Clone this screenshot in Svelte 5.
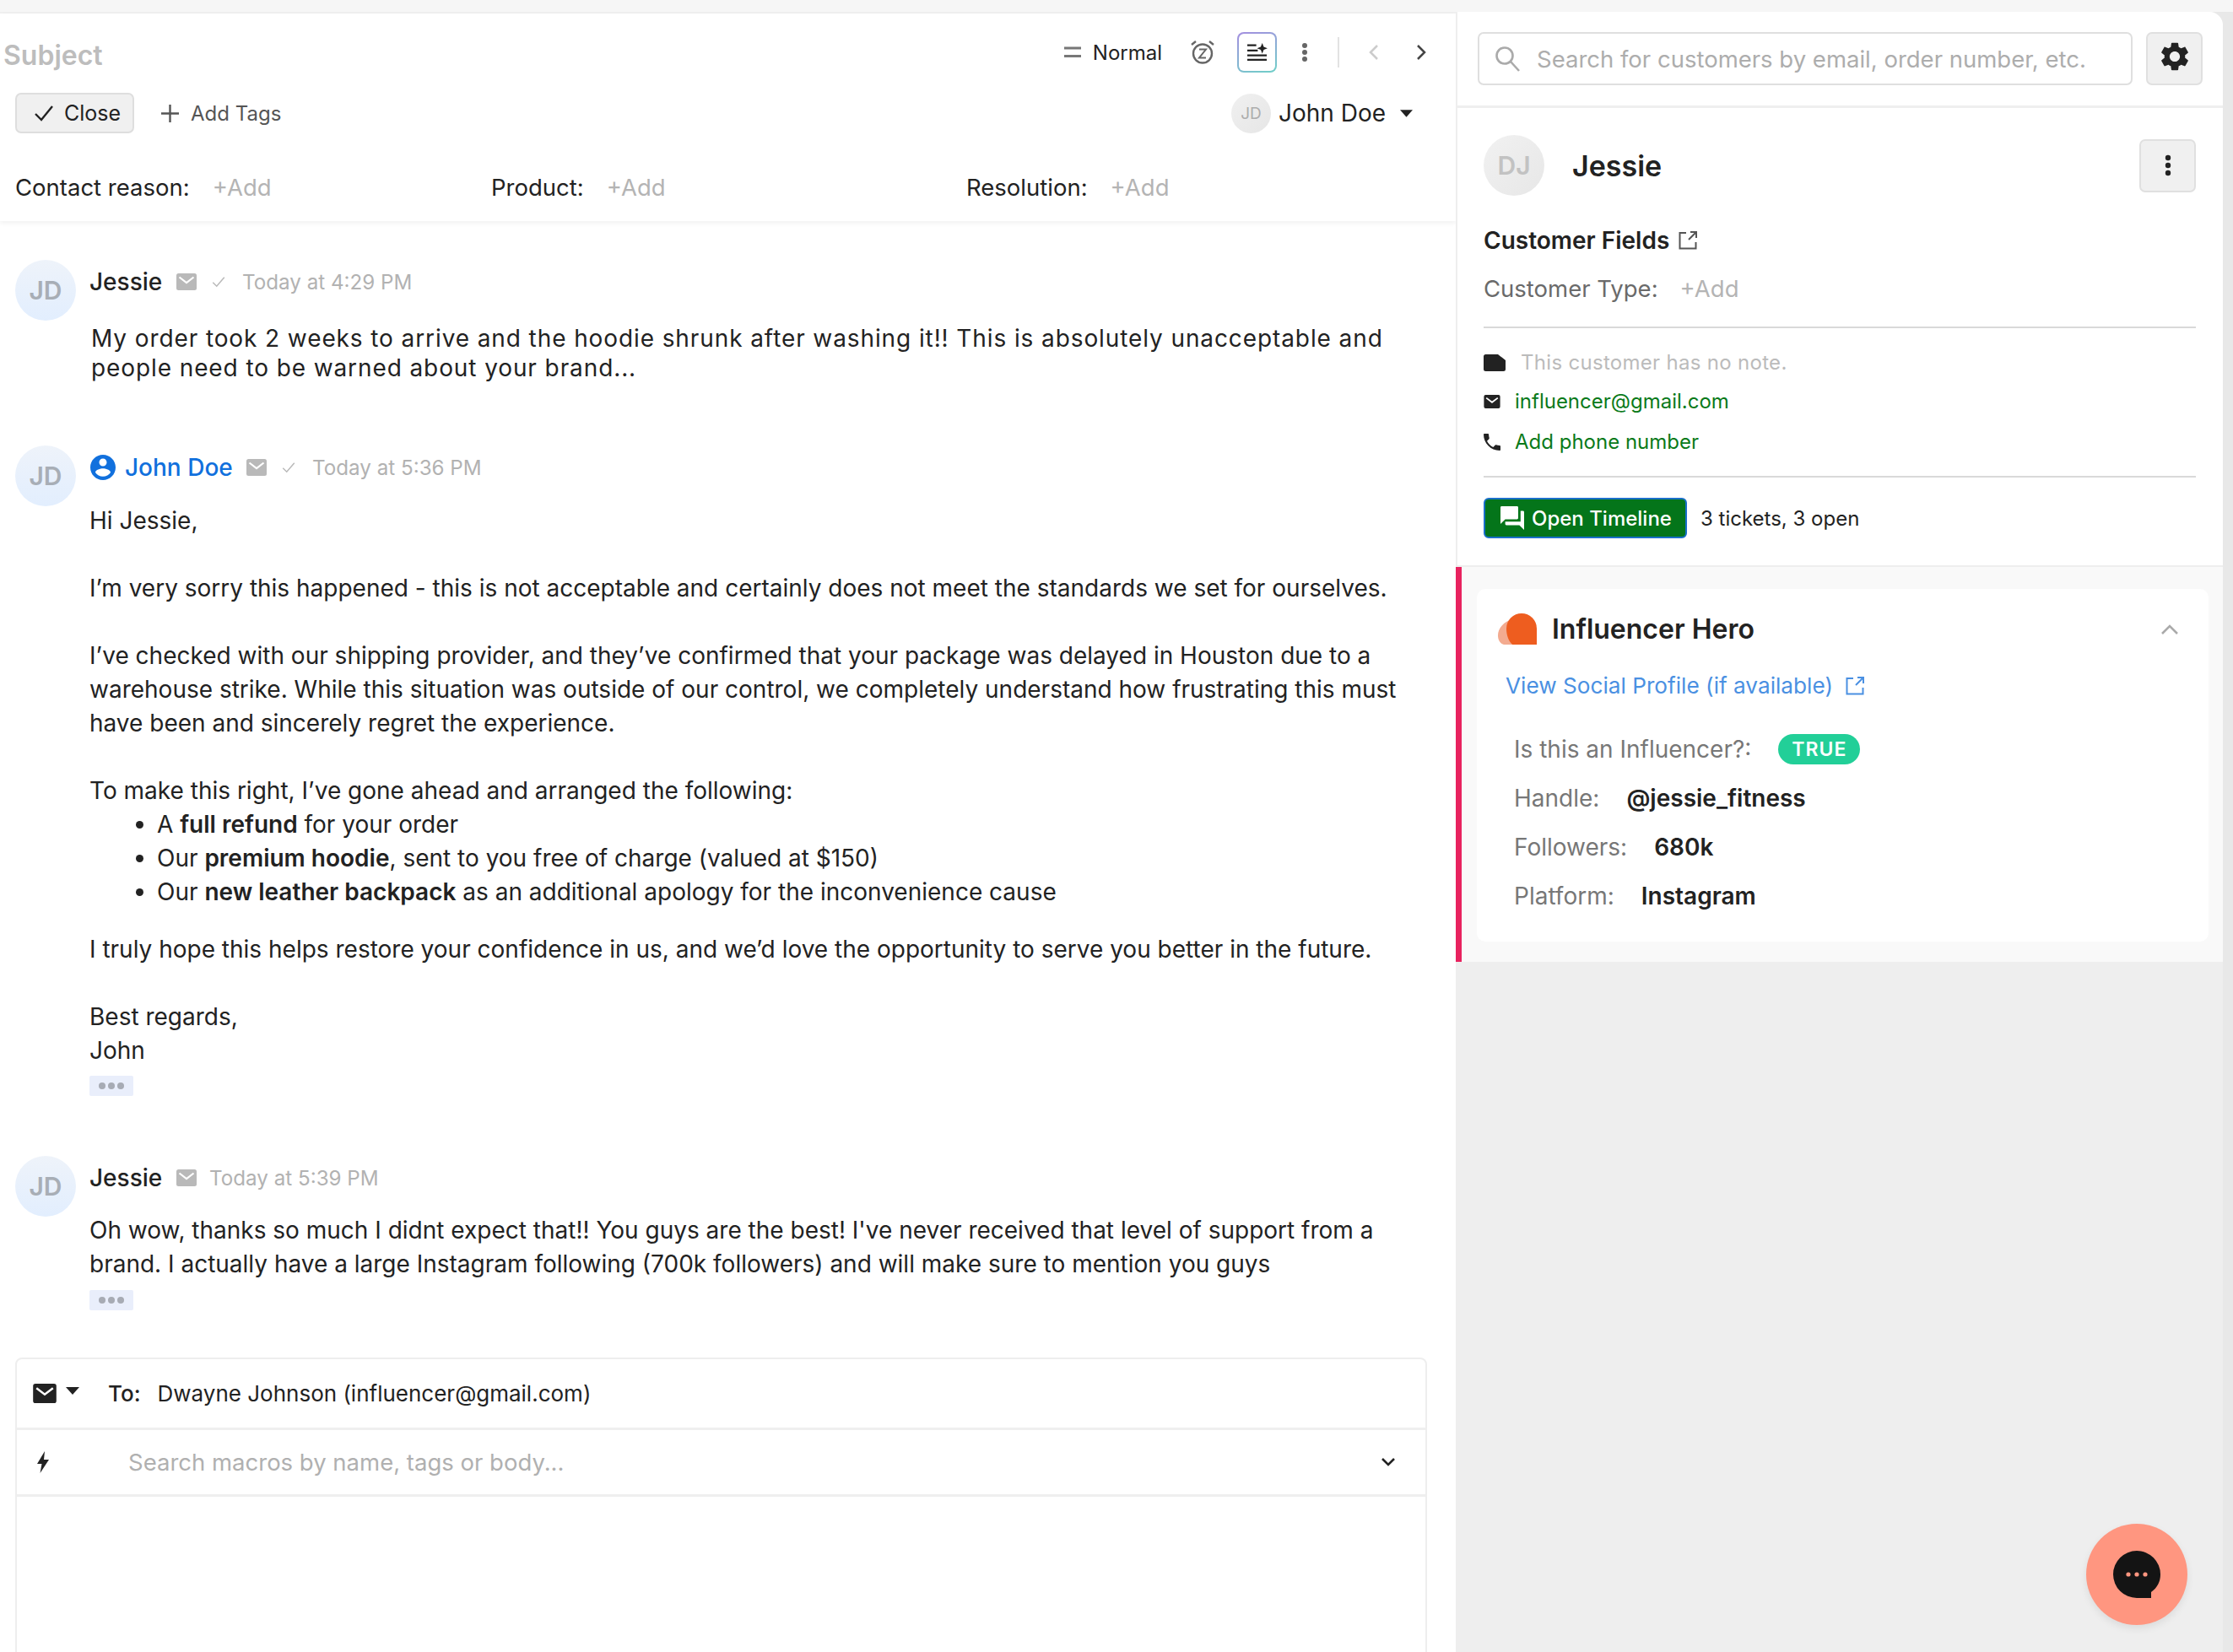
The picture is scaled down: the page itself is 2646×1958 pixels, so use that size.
<script lang="ts">
	const fields = [
		{ label: 'Contact reason:', width: 564 },
		{ label: 'Product:', width: 563 },
		{ label: 'Resolution:', width: 400 }
	];
</script>

{#snippet mail(w, h, fill)}
	<svg class="icon" width={w} height={h} viewBox="0 0 24 20">
		<rect width="24" height="20" rx="2.5" fill={fill} />
		<path d="M3.5 4.5 12 11l8.5-6.5" fill="none" stroke="#fff" stroke-width="2.2" />
	</svg>
{/snippet}

{#snippet check(w, color)}
	<svg class="icon" width={w} height={w} viewBox="0 0 24 24">
		<path d="M3 13l6 6L21 5" fill="none" stroke={color} stroke-width="2" />
	</svg>
{/snippet}

{#snippet caret(w, h)}
	<svg class="icon" width={w} height={h} viewBox="0 0 16 9"><path d="M0 0h16L8 9z" fill="#222" /></svg>
{/snippet}

{#snippet external(color)}
	<svg class="icon" width="24" height="24" viewBox="0 0 24 24" fill="none" stroke={color} stroke-width="2">
		<path d="M10 3H2.5v18.500h19V14M13 11 22 2M15 2h7v7" />
	</svg>
{/snippet}

{#snippet more()}
	<div class="more"><i></i><i></i><i></i></div>
{/snippet}

<div class="app">
	<main class="ticket">
		<header class="head">
			<div class="row-top">
				<h1>Subject</h1>
				<div class="tools">
					<svg class="icon" width="20" height="14" viewBox="0 0 20 14"><path d="M0 2h20M0 11.500h20" stroke="#777" stroke-width="3" /></svg>
					<span class="priority">Normal</span>
					<svg class="icon snooze" width="30" height="30" viewBox="0 0 30 30" fill="none" stroke="#666" stroke-width="2.400">
						<circle cx="15" cy="16.500" r="11" />
						<path d="M2 6l5-4M28 6l-5-4" />
						<path d="M11 11.500h8l-8 10h8" stroke-width="2" />
					</svg>
					<button class="ai" aria-label="Summarize">
						<svg width="25" height="23" viewBox="0 0 28 26">
							<path d="M1 5h12M1 12h14M1 18.500h26M1 24.500h26" stroke="#222" stroke-width="2.500" transform="translate(0 -2)" />
							<path d="M21 0l2 5 5 2-5 2-2 5-2-5-5-2 5-2z" fill="#222" />
						</svg>
					</button>
					<svg class="icon dots" width="10" height="24" viewBox="0 0 10 24"><circle cx="5" cy="4" r="3" fill="#666" /><circle cx="5" cy="12" r="3" fill="#666" /><circle cx="5" cy="20" r="3" fill="#666" /></svg>
					<span class="sep"></span>
					<svg class="icon prev" width="14" height="20" viewBox="0 0 14 20"><path d="M11 2 3 10l8 8" fill="none" stroke="#ccc" stroke-width="2.500" /></svg>
					<svg class="icon next" width="14" height="20" viewBox="0 0 14 20"><path d="M3 2l8 8-8 8" fill="none" stroke="#444" stroke-width="2.500" /></svg>
				</div>
			</div>
			<div class="row-mid">
				<button class="close">
					<svg width="24" height="20" viewBox="0 0 24 20"><path d="M2 11l7 7L22 2" fill="none" stroke="#222" stroke-width="2.400" /></svg>
					Close
				</button>
				<span class="tags">
					<svg width="21" height="21" viewBox="0 0 21 21"><path d="M10.500 0v21M0 10.500h21" stroke="#555" stroke-width="2.400" /></svg>
					Add Tags
				</span>
				<div class="assignee">
					<span class="mini">JD</span>
					<span class="assignee-name">John Doe</span>
					{@render caret(15, 9)}
				</div>
			</div>
			<div class="row-fields">
				{#each fields as f}
					<div class="field" style="width: {f.width}px">
						<span>{f.label}</span>
						<span class="add">+Add</span>
					</div>
				{/each}
			</div>
		</header>

		<section class="thread">
			<article class="msg first">
				<div class="avatar">JD</div>
				<div class="msg-main">
					<div class="meta">
						<span class="who">Jessie</span>
						{@render mail(24, 20, '#b9b9b9')}
						{@render check(18, '#b9b9b9')}
						<span class="time">Today at 4:29 PM</span>
					</div>
					<p class="customer-text">
						My order took 2 weeks to arrive and the hoodie shrunk after washing it!! This is absolutely unacceptable and<br />
						people need to be warned about your brand...
					</p>
				</div>
			</article>

			<article class="msg second">
				<div class="avatar">JD</div>
				<div class="msg-main">
					<div class="meta">
						<svg class="icon person" width="30" height="30" viewBox="2 2 20 20"><path fill="#1170dd" d="M12 2C6.480 2 2 6.480 2 12s4.480 10 10 10 10-4.480 10-10S17.520 2 12 2zm0 3c1.660 0 3 1.340 3 3s-1.340 3-3 3-3-1.340-3-3 1.340-3 3-3zm0 14.200c-2.500 0-4.710-1.280-6-3.220.030-1.990 4-3.080 6-3.080 1.990 0 5.970 1.090 6 3.080-1.290 1.940-3.500 3.220-6 3.220z" /></svg>
						<span class="who agent">John Doe</span>
						{@render mail(24, 20, '#b9b9b9')}
						{@render check(18, '#b9b9b9')}
						<span class="time">Today at 5:36 PM</span>
					</div>
					<div class="body">
						<p>Hi Jessie,</p>
						<p>I’m very sorry this happened - this is not acceptable and certainly does not meet the standards we set for ourselves.</p>
						<p>I’ve checked with our shipping provider, and they’ve confirmed that your package was delayed in Houston due to a<br />
							warehouse strike. While this situation was outside of our control, we completely understand how frustrating this must<br />
							have been and sincerely regret the experience.</p>
						<p class="tight">To make this right, I’ve gone ahead and arranged the following:</p>
						<ul>
							<li>A <b>full refund</b> for your order</li>
							<li>Our <b>premium hoodie</b>, sent to you free of charge (valued at $150)</li>
							<li>Our <b>new leather backpack</b> as an additional apology for the inconvenience cause</li>
						</ul>
						<p>I truly hope this helps restore your confidence in us, and we’d love the opportunity to serve you better in the future.</p>
						<p class="tight">Best regards,<br />John</p>
					</div>
					{@render more()}
				</div>
			</article>

			<article class="msg third">
				<div class="avatar">JD</div>
				<div class="msg-main">
					<div class="meta">
						<span class="who">Jessie</span>
						{@render mail(24, 20, '#b9b9b9')}
						<span class="time t3">Today at 5:39 PM</span>
					</div>
					<div class="body">
						<p class="tight">Oh wow, thanks so much I didnt expect that!! You guys are the best! I've never received that level of support from a<br />
							brand. I actually have a large Instagram following (700k followers) and will make sure to mention you guys</p>
					</div>
					{@render more()}
				</div>
			</article>
		</section>

		<section class="composer">
			<div class="to-row">
				{@render mail(28, 23, '#222')}
				<span class="to-caret">{@render caret(16, 9)}</span>
				<span class="to">To:</span>
				<span>Dwayne Johnson (influencer@gmail.com)</span>
			</div>
			<div class="macro-row">
				<svg class="icon" width="14" height="26" viewBox="0 0 14 26"><path d="M9 0 0 15h5.500L3.500 26 14 10H8z" fill="#222" /></svg>
				<span class="macro-text">Search macros by name, tags or body...</span>
				<svg class="icon" width="16" height="10" viewBox="0 0 16 10"><path d="M1 1l7 7 7-7" fill="none" stroke="#222" stroke-width="2.600" /></svg>
			</div>
		</section>
	</main>

	<aside class="side">
		<div class="panel">
			<div class="search-row">
				<div class="search">
					<svg class="icon" width="30" height="32" viewBox="0 0 30 32" fill="none" stroke="#aaa" stroke-width="2.600"><circle cx="12" cy="12" r="9.500" /><path d="M19 19l10 11" /></svg>
					<span>Search for customers by email, order number, etc.</span>
				</div>
				<button class="square" aria-label="Settings">
					<svg class="gear" width="34" height="34" viewBox="2 2 20 20"><path fill="#222" d="M19.140 12.940c.040-.300.060-.610.060-.940 0-.320-.020-.640-.070-.940l2.030-1.580c.180-.140.230-.410.120-.610l-1.920-3.320c-.120-.220-.370-.290-.590-.220l-2.390.960c-.500-.380-1.030-.700-1.620-.940l-.360-2.540c-.040-.240-.240-.410-.480-.410h-3.840c-.240 0-.430.170-.470.410l-.360 2.540c-.590.240-1.130.570-1.620.940l-2.390-.960c-.220-.080-.470 0-.590.220L2.740 8.870c-.120.210-.080.470.120.610l2.030 1.580c-.050.300-.090.630-.090.940s.020.640.070.940l-2.030 1.580c-.180.140-.230.410-.12.610l1.920 3.320c.120.220.370.290.590.220l2.390-.960c.500.380 1.030.700 1.620.940l.360 2.540c.050.240.240.410.480.410h3.840c.240 0 .440-.170.470-.410l.360-2.540c.590-.240 1.130-.560 1.620-.940l2.390.960c.220.080.470 0 .590-.220l1.920-3.320c.120-.220.070-.470-.120-.610l-2.010-1.580zM12 15.600c-1.980 0-3.600-1.620-3.600-3.600s1.620-3.600 3.600-3.600 3.600 1.620 3.600 3.600-1.620 3.600-3.600 3.600z" /></svg>
				</button>
			</div>
			<div class="customer">
				<div class="cust-head">
					<div class="avatar grey">DJ</div>
					<span class="cust-name">Jessie</span>
					<button class="square kebab" aria-label="More">
						<svg width="10" height="26" viewBox="0 0 10 26"><circle cx="5" cy="4" r="3.200" fill="#222" /><circle cx="5" cy="13" r="3.200" fill="#222" /><circle cx="5" cy="22" r="3.200" fill="#222" /></svg>
					</button>
				</div>
				<div class="cf-title">Customer Fields {@render external('#555')}</div>
				<div class="cf-type"><span>Customer Type:</span><span class="add">+Add</span></div>
				<hr />
				<div class="line note">
					<svg class="icon" width="26" height="20" viewBox="0 0 26 20"><path d="M2.500 0H17l9 7v10.500a2.500 2.500 0 0 1-2.500 2.500h-21A2.500 2.500 0 0 1 0 17.500v-15A2.500 2.500 0 0 1 2.500 0z" fill="#222" /></svg>
					<span>This customer has no note.</span>
				</div>
				<div class="line contact email">
					{@render mail(20, 16, '#222')}
					<span>influencer@gmail.com</span>
				</div>
				<div class="line contact phone">
					<svg class="icon" width="20" height="20" viewBox="3 3 18 18"><path fill="#222" d="M6.620 10.790c1.440 2.830 3.760 5.140 6.590 6.590l2.200-2.200c.270-.270.670-.360 1.020-.240 1.120.370 2.330.570 3.570.570.550 0 1 .450 1 1V20c0 .550-.450 1-1 1-9.390 0-17-7.610-17-17 0-.550.450-1 1-1h3.500c.550 0 1 .450 1 1 0 1.250.200 2.450.570 3.570.110.350.030.740-.250 1.020l-2.200 2.200z" /></svg>
					<span>Add phone number</span>
				</div>
				<hr class="second-rule" />
				<div class="timeline">
					<button class="open">
						<svg width="28" height="28" viewBox="2 2 20 20"><path fill="#fff" d="M21 6h-2v9H6v2c0 .550.450 1 1 1h11l4 4V7c0-.550-.450-1-1-1zm-4 6V3c0-.550-.450-1-1-1H3c-.550 0-1 .450-1 1v14l4-4h10c.550 0 1-.450 1-1z" /></svg>
						Open Timeline
					</button>
					<span>3 tickets, 3 open</span>
				</div>
			</div>
		</div>

		<div class="widget">
			<div class="card">
				<div class="card-head">
					<svg class="icon" width="46" height="37" viewBox="0 0 46 37">
						<path d="M14 8C4 12 0 20 0 26c0 6 3 10 7 11h10C12 30 10 22 14 8z" fill="#f3ab90" />
						<path d="M46 37V18a18 18 0 0 0-36 0c0 7 2 14 7 19z" fill="#ee5d1f" />
					</svg>
					<h2>Influencer Hero</h2>
					<svg class="icon up" width="20" height="12" viewBox="0 0 20 12"><path d="M1 11l9-9 9 9" fill="none" stroke="#aaa" stroke-width="2.600" /></svg>
				</div>
				<div class="social">View Social Profile (if available) {@render external('#4a90e2')}</div>
				<div class="kv"><span>Is this an Influencer?:</span><span class="badge">TRUE</span></div>
				<div class="kv"><span>Handle:</span><b>@jessie_fitness</b></div>
				<div class="kv"><span>Followers:</span><b>680k</b></div>
				<div class="kv"><span>Platform:</span><b>Instagram</b></div>
			</div>
		</div>
	</aside>

	<button class="chat" aria-label="Chat">
		<svg width="56" height="56" viewBox="0 0 56 56">
			<path d="M28 0a28 28 0 0 1 28 28c0 9-4 16-11 21v7H28A28 28 0 0 1 28 0z" fill="#141414" />
			<circle cx="18" cy="28" r="2.600" fill="#ff9680" /><circle cx="28" cy="28" r="2.600" fill="#ff9680" /><circle cx="38" cy="28" r="2.600" fill="#ff9680" />
		</svg>
	</button>
</div>

<style>
	:global(body) {
		font-family: Inter, 'Liberation Sans', sans-serif;
		color: #222;
	}

	.app {
		position: relative;
		display: flex;
		width: 2646px;
		height: 1958px;
		padding-top: 14px;
		box-sizing: border-box;
		overflow: hidden;
		background: linear-gradient(#f6f6f6 14px, #e8e8e8 14px);
	}

	button {
		font: inherit;
		color: inherit;
		padding: 0;
		cursor: pointer;
	}

	.icon {
		flex: none;
		display: block;
	}

	.ticket {
		width: 1725px;
		background: #fff;
		border-top: 2px solid #efefef;
		box-sizing: border-box;
	}

	.head {
		height: 246px;
		box-shadow: 0 3px 5px rgba(0, 0, 0, 0.05);
	}

	.row-top {
		display: flex;
		align-items: center;
		height: 48px;
		padding-top: 22px;
	}

	h1 {
		margin: 6px 0 0 4px;
		font-size: 32px;
		font-weight: 600;
		color: #bdbdbd;
	}

	.tools {
		display: flex;
		align-items: center;
		margin-left: auto;
		padding-right: 34px;
	}

	.priority {
		margin: 0 33px 0 14px;
		font-size: 24px;
		font-weight: 400;
	}

	.ai {
		display: flex;
		align-items: center;
		justify-content: center;
		width: 47px;
		height: 48px;
		margin: 0 28px 0 26px;
		border: 2px solid transparent;
		border-radius: 8px;
		background:
			linear-gradient(#fff, #fff) padding-box,
			linear-gradient(160deg, #a48ee0, #6fd0c8) border-box;
	}

	.sep {
		width: 2px;
		height: 36px;
		margin: 0 34px;
		background: #e2e2e2;
	}

	.next {
		margin-left: 42px;
	}

	.row-mid {
		display: flex;
		align-items: center;
		height: 48px;
		margin-top: 24px;
		padding-left: 18px;
		font-size: 24px;
	}

	.close {
		display: flex;
		align-items: center;
		gap: 12px;
		width: 141px;
		height: 48px;
		padding-left: 20px;
		box-sizing: border-box;
		background: #f0f0f0;
		border: 2px solid #dedede;
		border-radius: 7px;
		font-size: 25px;
		font-weight: 400;
	}

	.tags {
		display: flex;
		align-items: center;
		gap: 14px;
		margin-left: 32px;
		color: #555;
	}

	.assignee {
		display: flex;
		align-items: center;
		gap: 9px;
		margin-left: auto;
		padding-right: 51px;
		font-size: 28px;
	}

	.assignee-name {
		margin-right: 8px;
	}

	.mini {
		display: flex;
		align-items: center;
		justify-content: center;
		width: 47px;
		height: 47px;
		border-radius: 50%;
		background: linear-gradient(135deg, #f0f0f0, #e6e6e6);
		font-size: 19px;
		color: #adadad;
	}

	.row-fields {
		display: flex;
		margin-top: 44px;
		padding-left: 18px;
		font-size: 27.5px;
		line-height: 40px;
	}

	.field {
		display: flex;
		gap: 27px;
	}

	.add {
		color: #b4b4b4;
	}

	.thread {
		padding: 46px 0 0 18px;
	}

	.msg {
		display: flex;
		gap: 17px;
	}

	.second {
		margin-top: 74px;
	}

	.third {
		margin-top: 71px;
	}

	.avatar {
		flex: none;
		display: flex;
		align-items: center;
		justify-content: center;
		width: 72px;
		height: 72px;
		border-radius: 50%;
		background: linear-gradient(#eef3fa, #e2eefe);
		font-size: 30px;
		font-weight: 600;
		color: #a8aeb6;
	}

	.avatar.grey {
		background: linear-gradient(135deg, #f1f1f1, #e7e7e7);
		color: #c2c2c2;
	}

	.meta {
		display: flex;
		align-items: center;
		height: 52px;
	}

	.who {
		width: 103px;
		margin-left: -1px;
		font-size: 28px;
		font-weight: 450;
	}

	.agent {
		width: 144px;
		color: #1170dd;
	}

	.meta :global(svg + svg) {
		margin-left: 17px;
	}

	.meta .person + .agent {
		margin-left: 11px;
	}

	.time {
		margin-left: 19px;
		font-size: 24.2px;
		color: #b2b2b2;
	}

	.t3 {
		margin-left: 15px;
	}

	.customer-text {
		margin: 24px 0 0 1px;
		font-size: 28px;
		line-height: 35px;
		letter-spacing: 0.9px;
		white-space: nowrap;
	}

	.body {
		margin: 16px 0 0 -1px;
		font-size: 28px;
		line-height: 40px;
		white-space: nowrap;
	}

	.second .body {
		margin-top: 16.5px;
	}

	.second .more {
		margin-top: 10.5px;
	}

	.body p {
		margin: 0 0 40px;
	}

	.body p.tight {
		margin: 0;
	}

	.body b {
		font-weight: 600;
	}

	ul {
		margin: 0 0 28px;
		padding-left: 80px;
	}

	.more {
		display: flex;
		align-items: center;
		justify-content: center;
		gap: 3px;
		width: 52px;
		height: 24px;
		margin: 11px 0 0 -1px;
		background: #e9eefb;
		border-radius: 2px;
	}

	.more i {
		width: 8px;
		height: 8px;
		border-radius: 50%;
		background: #a7abb4;
	}

	.composer {
		height: 400px;
		margin: 56px 34px 0 18px;
		border: 2px solid #eee;
		border-radius: 8px 8px 0 0;
		font-size: 26px;
	}

	.to-row {
		display: flex;
		align-items: center;
		height: 81px;
		padding-left: 19px;
		border-bottom: 3px solid #efefef;
	}

	.to-caret {
		margin-left: 11px;
		padding-bottom: 6px;
	}

	.to {
		margin: 0 20px 0 34px;
		font-weight: 500;
	}

	.macro-row {
		display: flex;
		align-items: center;
		height: 76px;
		padding: 0 36px 0 24px;
		border-bottom: 3px solid #efefef;
	}

	.macro-text {
		margin-left: 94px;
		margin-right: auto;
		font-size: 27.5px;
		color: #b0b0b0;
	}

	.side {
		flex: 1;
		min-width: 0;
		display: flex;
		flex-direction: column;
		background: #eee;
		border-top-right-radius: 16px;
		margin-right: 12px;
	}

	.panel {
		height: 656px;
		background: #fff;
		border-left: 2px solid #eee;
		border-bottom: 2px solid #eee;
		border-top-right-radius: 16px;
		box-sizing: content-box;
	}

	.search-row {
		display: flex;
		gap: 16px;
		height: 87px;
		padding: 24px 0 0 24px;
		border-bottom: 3px solid #efefef;
		box-sizing: content-box;
	}

	.search {
		display: flex;
		align-items: center;
		gap: 20px;
		width: 776px;
		height: 63px;
		padding-left: 18px;
		box-sizing: border-box;
		border: 2px solid #dfdfdf;
		border-radius: 7px;
		font-size: 27.5px;
		color: #adadad;
	}

	.square {
		display: flex;
		align-items: center;
		justify-content: center;
		width: 67px;
		height: 63px;
		background: #f0f0f0;
		border: 2px solid #e0e0e0;
		border-radius: 7px;
	}

	.gear {
		margin-bottom: 5px;
	}

	.customer {
		padding: 32px 32px 0 31px;
	}

	.cust-head {
		display: flex;
		align-items: center;
		height: 72px;
	}

	.cust-name {
		margin-left: 33px;
		font-size: 34px;
		font-weight: 600;
	}

	.kebab {
		margin-left: auto;
	}

	.cf-title {
		display: flex;
		align-items: center;
		gap: 10px;
		margin-top: 33px;
		line-height: 40px;
		font-size: 28px;
		font-weight: 600;
	}

	.cf-type {
		display: flex;
		gap: 26px;
		margin-top: 17px;
		line-height: 40px;
		font-size: 27.5px;
		color: #6a6a6a;
	}

	hr {
		height: 2px;
		margin: 25px 0 0;
		border: 0;
		background: #d9d9d9;
	}

	.line {
		display: flex;
		align-items: center;
		font-size: 24px;
		line-height: 34px;
	}

	.note {
		gap: 18px;
		margin-top: 24px;
		color: #bbb;
		letter-spacing: 0.3px;
	}

	.contact {
		gap: 17px;
		color: #0a7a1a;
	}

	.email {
		margin-top: 12px;
	}

	.phone {
		margin-top: 14px;
	}

	.second-rule {
		margin-top: 23px;
	}

	.timeline {
		display: flex;
		align-items: center;
		gap: 16px;
		margin-top: 24px;
		font-size: 24px;
	}

	.open {
		display: flex;
		align-items: center;
		gap: 9px;
		width: 241px;
		height: 48px;
		padding-left: 18px;
		box-sizing: border-box;
		background: #04751a;
		border: 2px solid #1a6fc9;
		border-radius: 6px;
		color: #fff;
		font-size: 24px;
		font-weight: 500;
	}

	.widget {
		height: 468px;
		padding: 26px 17px 24px 18px;
		box-sizing: border-box;
		background: #f9f9f9;
		border-left: 7px solid #e8225f;
	}

	.card {
		height: 418px;
		padding: 29px 36px 0 25px;
		box-sizing: border-box;
		background: #fff;
		border-radius: 10px;
	}

	.card-head {
		display: flex;
		align-items: center;
		height: 37px;
	}

	h2 {
		margin: 0 0 0 18px;
		font-size: 32px;
		font-weight: 600;
	}

	.up {
		margin-left: auto;
	}

	.social {
		display: flex;
		align-items: center;
		gap: 14px;
		margin: 29px 0 0 9px;
		font-size: 26.2px;
		line-height: 40px;
		color: #4a90e2;
	}

	.kv {
		display: flex;
		align-items: center;
		gap: 32px;
		height: 40px;
		margin: 18px 0 0 19px;
		font-size: 28px;
		color: #777;
	}

	.social + .kv {
		margin-top: 35px;
	}

	.kv b {
		font-weight: 600;
		color: #222;
	}

	.badge {
		padding: 0 16px;
		border-radius: 18px;
		background: #22cf98;
		color: #fff;
		font-size: 23px;
		font-weight: 600;
		line-height: 36px;
		letter-spacing: 1px;
	}

	.chat {
		position: absolute;
		left: 2472px;
		top: 1806px;
		display: flex;
		align-items: center;
		justify-content: center;
		width: 120px;
		height: 120px;
		border: 0;
		border-radius: 50%;
		background: #ff9680;
		box-shadow: 0 4px 10px rgba(0, 0, 0, 0.08);
	}
</style>
